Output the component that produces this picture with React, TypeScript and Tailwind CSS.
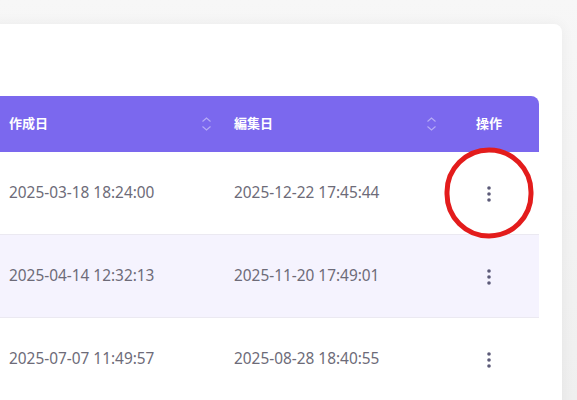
import React from "react";

// rows of the listing, only the visible part
const rows = [
  { created: "2025-03-18 18:24:00", edited: "2025-12-22 17:45:44" },
  { created: "2025-04-14 12:32:13", edited: "2025-11-20 17:49:01" },
  { created: "2025-07-07 11:49:57", edited: "2025-08-28 18:40:55" },
];

function SortIcon() {
  return (
    <svg width="11" height="14" viewBox="0 0 11 14" fill="none" className="shrink-0">
      <path d="M1.5 4.5 L5.5 1 L9.5 4.5" stroke="rgba(255,255,255,0.45)" strokeWidth="1.1" />
      <path d="M1.5 9.5 L5.5 13 L9.5 9.5" stroke="rgba(255,255,255,0.45)" strokeWidth="1.1" />
    </svg>
  );
}

function MoreIcon() {
  return (
    <svg width="6" height="18" viewBox="0 0 6 18" className="shrink-0 mt-[2px]">
      <circle cx="3" cy="3" r="1.8" fill="#5c5a78" />
      <circle cx="3" cy="9" r="1.8" fill="#5c5a78" />
      <circle cx="3" cy="15" r="1.8" fill="#5c5a78" />
    </svg>
  );
}

export default function App() {
  return (
    <div
      className="min-h-screen h-[400px] overflow-hidden bg-[#f1f1f1] bg-gradient-to-b from-[#f7f7f7] to-[#efefef] pt-[24px]"
      style={{ fontFamily: '"Noto Sans", "Noto Sans CJK JP", sans-serif' }}
    >
      <div className="-ml-[20px] w-[582px] h-[420px] bg-white rounded-t-lg shadow-[0_0_14px_rgba(0,0,0,0.05)] pt-[72px] pl-[20px] pr-[23px]">
        <div className="flex flex-col">
          {/* header */}
          <div className="flex h-[56px] items-center bg-[#7b68ee] rounded-tr-lg text-white text-[13px] font-bold">
            <div className="w-[224px] pl-[9px] pr-[12px] flex items-center justify-between">
              <span>作成日</span>
              <SortIcon />
            </div>
            <div className="w-[215px] pl-[10px] pr-[2px] flex items-center justify-between">
              <span>編集日</span>
              <SortIcon />
            </div>
            <div className="flex-1 text-center">操作</div>
          </div>

          {rows.map((r, i) => (
            <div
              key={i}
              className={
                "flex h-[83px] items-center border-b border-[#ebe9f1] text-[15.4px] text-[#6d6b78] " +
                (i === 1 ? "bg-[#f5f3fe]" : "bg-white")
              }
            >
              <div className="w-[224px] pl-[9px]">{r.created}</div>
              <div className="w-[215px] pl-[10px]">{r.edited}</div>
              <div className="flex-1 flex justify-center relative">
                <MoreIcon />
                {i === 0 && (
                  <div className="absolute left-1/2 top-1/2 -translate-x-1/2 -translate-y-1/2 w-[89px] h-[91px] rounded-full border-[5px] border-[#e31c1c]" />
                )}
              </div>
            </div>
          ))}
        </div>
      </div>
    </div>
  );
}
